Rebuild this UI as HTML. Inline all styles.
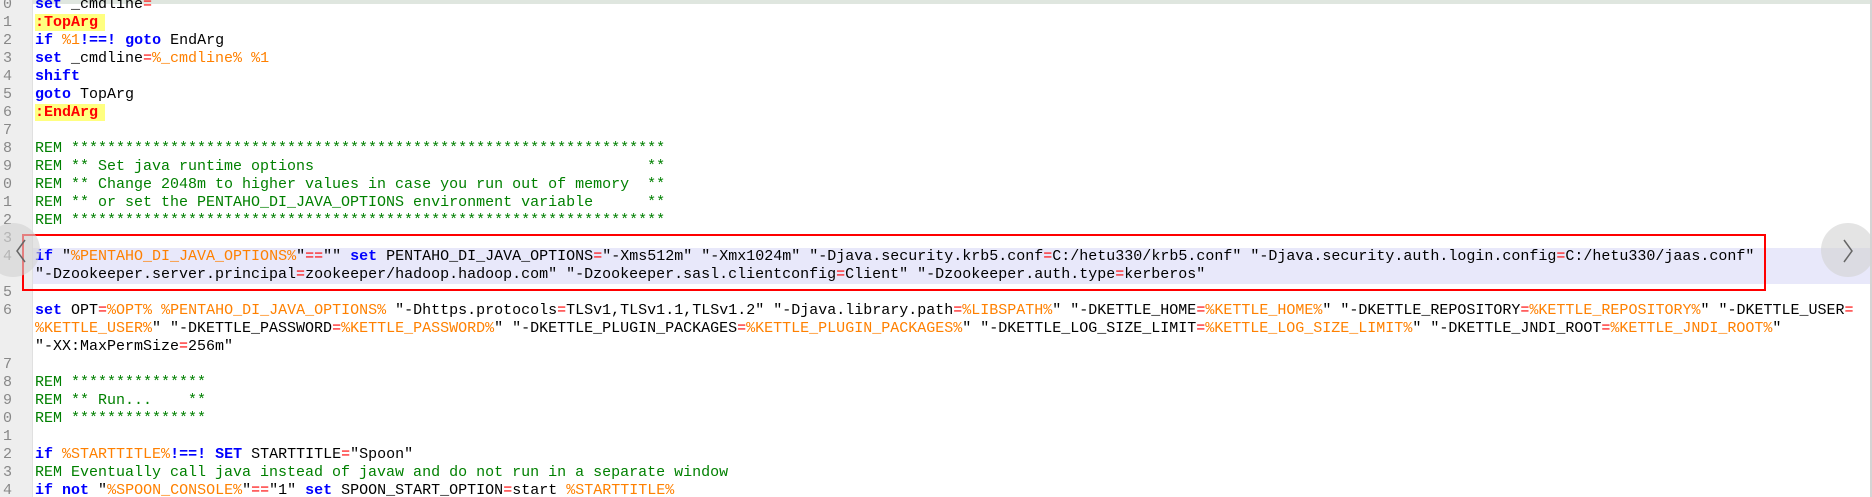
<!DOCTYPE html>
<html><head><meta charset="utf-8"><style>
html,body{margin:0;padding:0;width:1872px;height:497px;overflow:hidden;background:#fff;position:relative}
.top{position:absolute;left:0;top:0;width:1872px;height:4px;background:#dfe6df}
.gut{position:absolute;left:0;top:0;width:32px;height:497px;background:#eeeeee;border-right:1px solid #e0e0e0}
.rb{position:absolute;right:0;top:0;width:2px;height:497px;background:#d4d4d4}
.hl{position:absolute;left:33px;top:248px;width:1837px;height:36px;background:#e8e8fa}
.r{position:absolute;left:35px;height:18px;line-height:18px;font-family:"Liberation Mono",monospace;font-size:15px;white-space:pre;color:#000}
.n{position:absolute;left:3px;height:18px;line-height:18px;font-family:"Liberation Mono",monospace;font-size:15px;color:#888}
.k{color:#0000ff;font-weight:bold}
.v{color:#ff8000}
.o{color:#ff0000}
.l{color:#ff0000;font-weight:bold;background:#ffff80;padding-right:7px}
.c{color:#008000}
.box{position:absolute;left:22px;top:234px;width:1740px;height:53px;border:2px solid #f00}
.circ{position:absolute;width:54px;height:54px;border-radius:50%;background:rgba(210,210,210,.6)}
</style></head><body>
<div class="top"></div>
<div class="gut"></div>
<div class="rb"></div>
<div class="hl"></div>

<div class="n" style="top:-4px">0</div>
<div class="n" style="top:14px">1</div>
<div class="n" style="top:32px">2</div>
<div class="n" style="top:50px">3</div>
<div class="n" style="top:68px">4</div>
<div class="n" style="top:86px">5</div>
<div class="n" style="top:104px">6</div>
<div class="n" style="top:122px">7</div>
<div class="n" style="top:140px">8</div>
<div class="n" style="top:158px">9</div>
<div class="n" style="top:176px">0</div>
<div class="n" style="top:194px">1</div>
<div class="n" style="top:212px">2</div>
<div class="n" style="top:230px">3</div>
<div class="n" style="top:248px">4</div>
<div class="n" style="top:284px">5</div>
<div class="n" style="top:302px">6</div>
<div class="n" style="top:356px">7</div>
<div class="n" style="top:374px">8</div>
<div class="n" style="top:392px">9</div>
<div class="n" style="top:410px">0</div>
<div class="n" style="top:428px">1</div>
<div class="n" style="top:446px">2</div>
<div class="n" style="top:464px">3</div>
<div class="n" style="top:482px">4</div>

<div class="r" style="top:-4px"><span class="k">set</span> _cmdline<span class="o">=</span></div>
<div class="r" style="top:14px"><span class="l">:TopArg</span></div>
<div class="r" style="top:32px"><span class="k">if</span> <span class="v">%1</span><span class="k">!==!</span> <span class="k">goto</span> EndArg</div>
<div class="r" style="top:50px"><span class="k">set</span> _cmdline<span class="o">=</span><span class="v">%_cmdline% %1</span></div>
<div class="r" style="top:68px"><span class="k">shift</span></div>
<div class="r" style="top:86px"><span class="k">goto</span> TopArg</div>
<div class="r" style="top:104px"><span class="l">:EndArg</span></div>
<div class="r" style="top:140px"><span class="c">REM ******************************************************************</span></div>
<div class="r" style="top:158px"><span class="c">REM ** Set java runtime options                                     **</span></div>
<div class="r" style="top:176px"><span class="c">REM ** Change 2048m to higher values in case you run out of memory  **</span></div>
<div class="r" style="top:194px"><span class="c">REM ** or set the PENTAHO_DI_JAVA_OPTIONS environment variable      **</span></div>
<div class="r" style="top:212px"><span class="c">REM ******************************************************************</span></div>
<div class="r" style="top:248px"><span class="k">if</span> "<span class="v">%PENTAHO_DI_JAVA_OPTIONS%</span>"<span class="o">==</span>"" <span class="k">set</span> PENTAHO_DI_JAVA_OPTIONS<span class="o">=</span>"-Xms512m" "-Xmx1024m" "-Djava.security.krb5.conf<span class="o">=</span>C:/hetu330/krb5.conf" "-Djava.security.auth.login.config<span class="o">=</span>C:/hetu330/jaas.conf"</div>
<div class="r" style="top:266px">"-Dzookeeper.server.principal<span class="o">=</span>zookeeper/hadoop.hadoop.com" "-Dzookeeper.sasl.clientconfig<span class="o">=</span>Client" "-Dzookeeper.auth.type<span class="o">=</span>kerberos"</div>
<div class="r" style="top:302px"><span class="k">set</span> OPT<span class="o">=</span><span class="v">%OPT%</span> <span class="v">%PENTAHO_DI_JAVA_OPTIONS%</span> "-Dhttps.protocols<span class="o">=</span>TLSv1,TLSv1.1,TLSv1.2" "-Djava.library.path<span class="o">=</span><span class="v">%LIBSPATH%</span>" "-DKETTLE_HOME<span class="o">=</span><span class="v">%KETTLE_HOME%</span>" "-DKETTLE_REPOSITORY<span class="o">=</span><span class="v">%KETTLE_REPOSITORY%</span>" "-DKETTLE_USER<span class="o">=</span></div>
<div class="r" style="top:320px"><span class="v">%KETTLE_USER%</span>" "-DKETTLE_PASSWORD<span class="o">=</span><span class="v">%KETTLE_PASSWORD%</span>" "-DKETTLE_PLUGIN_PACKAGES<span class="o">=</span><span class="v">%KETTLE_PLUGIN_PACKAGES%</span>" "-DKETTLE_LOG_SIZE_LIMIT<span class="o">=</span><span class="v">%KETTLE_LOG_SIZE_LIMIT%</span>" "-DKETTLE_JNDI_ROOT<span class="o">=</span><span class="v">%KETTLE_JNDI_ROOT%</span>"</div>
<div class="r" style="top:338px">"-XX:MaxPermSize<span class="o">=</span>256m"</div>
<div class="r" style="top:374px"><span class="c">REM ***************</span></div>
<div class="r" style="top:392px"><span class="c">REM ** Run...    **</span></div>
<div class="r" style="top:410px"><span class="c">REM ***************</span></div>
<div class="r" style="top:446px"><span class="k">if</span> <span class="v">%STARTTITLE%</span><span class="k">!==!</span> <span class="k">SET</span> STARTTITLE<span class="o">=</span>"Spoon"</div>
<div class="r" style="top:464px"><span class="c">REM Eventually call java instead of javaw and do not run in a separate window</span></div>
<div class="r" style="top:482px"><span class="k">if</span> <span class="k">not</span> "<span class="v">%SPOON_CONSOLE%</span>"<span class="o">==</span>"1" <span class="k">set</span> SPOON_START_OPTION<span class="o">=</span>start <span class="v">%STARTTITLE%</span></div>

<div class="box"></div>
<div class="circ" style="left:-14px;top:223px"></div>
<svg style="position:absolute;left:14px;top:238px" width="14" height="26"><path d="M11 2 L3 13 L11 24" fill="none" stroke="#666" stroke-width="1.5"/></svg>
<div class="circ" style="left:1821px;top:223px"></div>
<svg style="position:absolute;left:1841px;top:238px" width="14" height="26"><path d="M3 2 L11 13 L3 24" fill="none" stroke="#666" stroke-width="1.5"/></svg>
</body></html>
